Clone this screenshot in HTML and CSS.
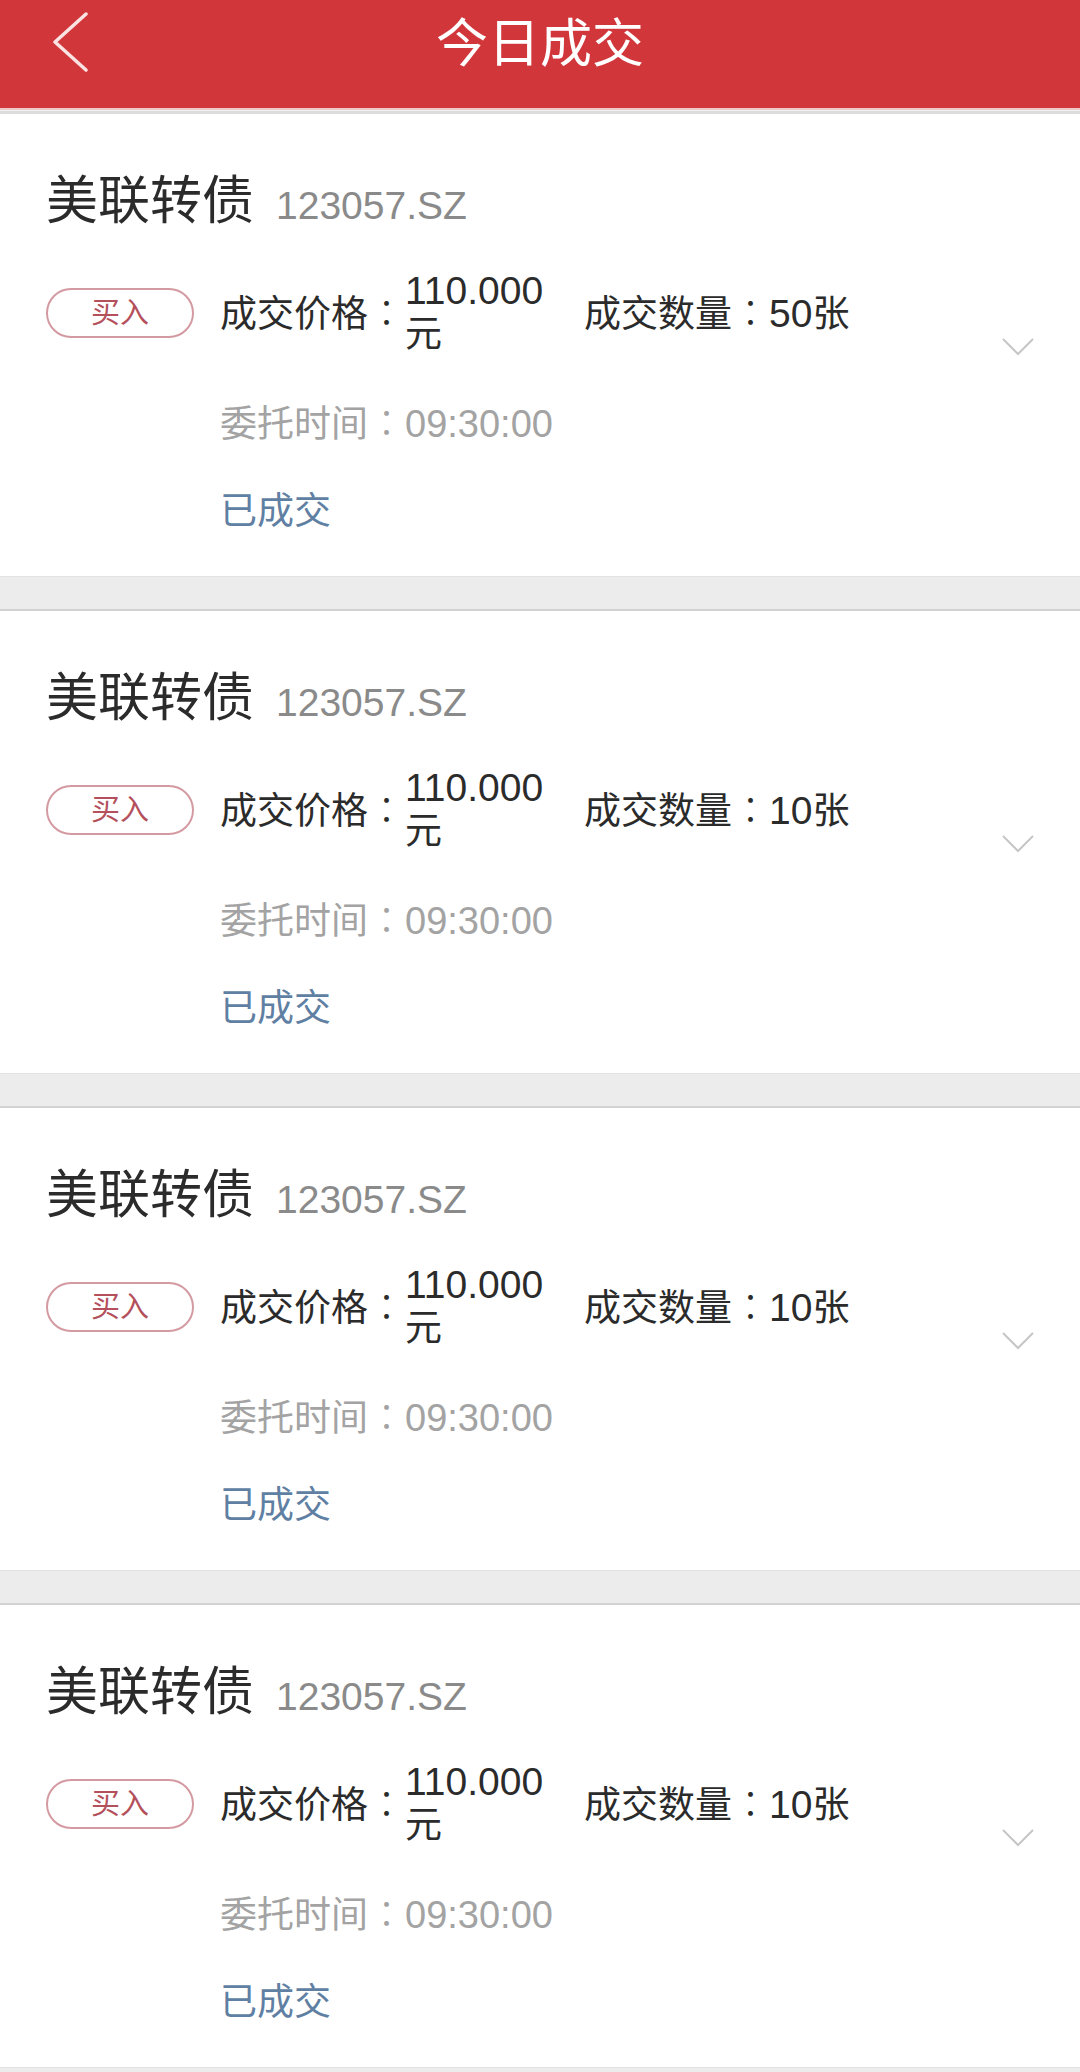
FILE: index.html
```html
<!DOCTYPE html>
<html lang="zh-CN">
<head>
    <meta charset="UTF-8">
    <meta name="viewport" content="width=device-width, initial-scale=1.0">
    <title>今日成交</title>
    <link rel="stylesheet" href="styles.css">
</head>
<body>
    <header class="topbar">
        <a class="back" href="#">
            <svg width="36" height="60" viewBox="0 0 36 60">
                <polyline points="34,2 3,30 34,58" fill="none" stroke="#fbe3e3" stroke-width="3.5" stroke-linecap="round" stroke-linejoin="round"/>
            </svg>
        </a>
        <h1 class="title">今日成交</h1>
        <span></span>
    </header>
    <div class="topbar-line"></div>

    <div class="list">
        <div class="card">
            <div class="name-row">
                <span class="name">美联转债</span>
                <span class="code">123057.SZ</span>
            </div>
            <div class="detail">
                <span class="tag">买入</span>
                <div class="trade">
                    <span class="label">成交价格<span class="colon" lang="zh-TW">：</span></span>
                    <span class="price"><span class="num">110.000</span>元</span>
                    <span class="label">成交数量<span class="colon" lang="zh-TW">：</span><span class="num">50</span>张</span>
                </div>
                <span class="time">委托时间<span class="colon" lang="zh-TW">：</span><span class="num">09:30:00</span></span>
                <span class="status">已成交</span>
            </div>
            <svg class="arrow" width="32" height="18" viewBox="0 0 32 18">
                <polyline points="1,1 16,16 31,1" fill="none" stroke="#c6c6c6" stroke-width="2"/>
            </svg>
        </div>
        <div class="divider"></div>

        <div class="card">
            <div class="name-row">
                <span class="name">美联转债</span>
                <span class="code">123057.SZ</span>
            </div>
            <div class="detail">
                <span class="tag">买入</span>
                <div class="trade">
                    <span class="label">成交价格<span class="colon" lang="zh-TW">：</span></span>
                    <span class="price"><span class="num">110.000</span>元</span>
                    <span class="label">成交数量<span class="colon" lang="zh-TW">：</span><span class="num">10</span>张</span>
                </div>
                <span class="time">委托时间<span class="colon" lang="zh-TW">：</span><span class="num">09:30:00</span></span>
                <span class="status">已成交</span>
            </div>
            <svg class="arrow" width="32" height="18" viewBox="0 0 32 18">
                <polyline points="1,1 16,16 31,1" fill="none" stroke="#c6c6c6" stroke-width="2"/>
            </svg>
        </div>
        <div class="divider"></div>

        <div class="card">
            <div class="name-row">
                <span class="name">美联转债</span>
                <span class="code">123057.SZ</span>
            </div>
            <div class="detail">
                <span class="tag">买入</span>
                <div class="trade">
                    <span class="label">成交价格<span class="colon" lang="zh-TW">：</span></span>
                    <span class="price"><span class="num">110.000</span>元</span>
                    <span class="label">成交数量<span class="colon" lang="zh-TW">：</span><span class="num">10</span>张</span>
                </div>
                <span class="time">委托时间<span class="colon" lang="zh-TW">：</span><span class="num">09:30:00</span></span>
                <span class="status">已成交</span>
            </div>
            <svg class="arrow" width="32" height="18" viewBox="0 0 32 18">
                <polyline points="1,1 16,16 31,1" fill="none" stroke="#c6c6c6" stroke-width="2"/>
            </svg>
        </div>
        <div class="divider"></div>

        <div class="card">
            <div class="name-row">
                <span class="name">美联转债</span>
                <span class="code">123057.SZ</span>
            </div>
            <div class="detail">
                <span class="tag">买入</span>
                <div class="trade">
                    <span class="label">成交价格<span class="colon" lang="zh-TW">：</span></span>
                    <span class="price"><span class="num">110.000</span>元</span>
                    <span class="label">成交数量<span class="colon" lang="zh-TW">：</span><span class="num">10</span>张</span>
                </div>
                <span class="time">委托时间<span class="colon" lang="zh-TW">：</span><span class="num">09:30:00</span></span>
                <span class="status">已成交</span>
            </div>
            <svg class="arrow" width="32" height="18" viewBox="0 0 32 18">
                <polyline points="1,1 16,16 31,1" fill="none" stroke="#c6c6c6" stroke-width="2"/>
            </svg>
        </div>
        <div class="divider"></div>
    </div>
</body>
</html>
```

FILE: styles.css
```css
body {
    margin: 0;
    padding: 0;
    background-color: #fff;
    color: #2b2b2b;
    font-family: "Liberation Sans", "Noto Sans CJK SC", sans-serif;
}

/* red title bar */
.topbar {
    height: 108px;
    background-color: #d1363a;
    display: grid;
    grid-template-columns: 1fr auto 1fr;
    align-items: start;
}

.back {
    display: flex;
    padding-left: 52px;
    padding-top: 12px;
}

.title {
    margin: 0;
    color: #fff;
    font-size: 52px;
    font-weight: normal;
    line-height: 88px;
}

.topbar-line {
    height: 1px;
    border-top: 2px solid #efc9c9;
    border-bottom: 3px solid #dcdcdc;
    background-color: #f2f2f2;
}

/* one trade */
.card {
    position: relative;
    box-sizing: border-box;
    height: 462px;
    background-color: #fff;
    padding: 57px 0 0 46px;
}

.name-row {
    display: flex;
    align-items: baseline;
    height: 60px;
    line-height: 60px;
}

.name {
    font-size: 52px;
}

.code {
    font-size: 39px;
    color: #8a8a8a;
    margin-left: 22px;
}

.detail {
    display: grid;
    grid-template-columns: 148px auto;
    grid-template-rows: 86px 44px 44px;
    column-gap: 26px;
    row-gap: 43px;
    margin-top: 39px;
}

.tag {
    box-sizing: border-box;
    height: 50px;
    border: 2px solid #d49aa1;
    border-radius: 25px;
    color: #b4505c;
    font-size: 29px;
    line-height: 46px;
    text-align: center;
    align-self: center;
}

.trade {
    display: flex;
    align-items: center;
    font-size: 37px;
    line-height: 43px;
}

/* centred full-width colon, as on the phone */
.colon {
    font-family: "Noto Sans CJK TC", sans-serif;
    font-weight: 300;
}

.num {
    font-size: 39px;
    line-height: 1;
}

.price {
    width: 150px;
    margin-right: 29px;
}

.time {
    grid-column: 2;
    font-size: 37px;
    line-height: 44px;
    color: #a3a3a3;
}

.time .num {
    font-size: 38px;
}

.status {
    grid-column: 2;
    margin-top: 4px;
    font-size: 37px;
    line-height: 44px;
    color: #5f7fa3;
}

.arrow {
    position: absolute;
    right: 46px;
    top: 224px;
}

.divider {
    box-sizing: border-box;
    height: 35px;
    background-color: #ececec;
    border-top: 1px solid #e2e2e2;
    border-bottom: 2px solid #d2d2d2;
}
```
